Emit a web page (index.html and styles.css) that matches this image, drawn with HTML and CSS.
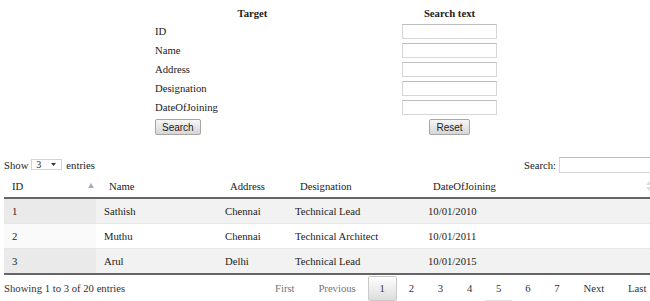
FILE: index.html
```html
<!doctype html>
<html lang="en">
<head>
    <meta charset="UTF-8">
    <meta name="viewport" content="width=device-width, initial-scale=1.0">
    <title>Employees</title>
    <link rel="stylesheet" href="styles.css">
</head>
<body>

<table class="search-panel">
    <colgroup>
        <col class="target-col">
        <col class="text-col">
    </colgroup>
    <thead>
    <tr>
        <th>Target</th>
        <th>Search text</th>
    </tr>
    </thead>
    <tbody>
    <tr><td>ID</td><td class="field"><input type="text" data-column="0"></td></tr>
    <tr><td>Name</td><td class="field"><input type="text" data-column="1"></td></tr>
    <tr><td>Address</td><td class="field"><input type="text" data-column="2"></td></tr>
    <tr><td>Designation</td><td class="field"><input type="text" data-column="3"></td></tr>
    <tr><td>DateOfJoining</td><td class="field"><input type="text" data-column="4"></td></tr>
    <tr class="actions">
        <td><button type="button">Search</button></td>
        <td class="field"><button type="button">Reset</button></td>
    </tr>
    </tbody>
</table>

<div class="dt-wrapper">
    <div class="dt-top">
        <label class="dt-length">
            Show
            <span class="len-select">3
                <svg width="5" height="3" viewBox="0 0 5 3"><path d="M0 0h5L2.5 3z" fill="#333"/></svg>
            </span>
            entries
        </label>
        <label class="dt-filter">
            Search:
            <input type="search">
        </label>
    </div>

    <table class="dt-table">
        <colgroup>
            <col style="width: 92px">
            <col style="width: 121px">
            <col style="width: 70px">
            <col style="width: 133px">
            <col>
        </colgroup>
        <thead>
        <tr>
            <th class="sorting-asc">
                <div class="th-inner">ID
                    <svg width="6" height="5" viewBox="0 0 6 5"><path d="M3 0L6 5H0z" fill="#a9a9cf"/></svg>
                </div>
            </th>
            <th>Name</th>
            <th>Address</th>
            <th>Designation</th>
            <th class="sorting">
                <div class="th-inner">DateOfJoining
                    <svg width="7" height="10" viewBox="0 0 7 10"><path d="M3.5 0L7 4H0zM3.5 10L0 6h7z" fill="#dedede"/></svg>
                </div>
            </th>
        </tr>
        </thead>
        <tbody>
        <tr>
            <td class="sorting-1">1</td><td>Sathish</td><td>Chennai</td><td>Technical Lead</td><td>10/01/2010</td>
        </tr>
        <tr>
            <td class="sorting-1">2</td><td>Muthu</td><td>Chennai</td><td>Technical Architect</td><td>10/01/2011</td>
        </tr>
        <tr>
            <td class="sorting-1">3</td><td>Arul</td><td>Delhi</td><td>Technical Lead</td><td>10/01/2015</td>
        </tr>
        </tbody>
    </table>

    <div class="dt-bottom">
        <div class="dt-info">Showing 1 to 3 of 20 entries</div>
        <div class="dt-paginate">
            <a class="page-btn disabled">First</a>
            <a class="page-btn disabled">Previous</a>
            <a class="page-btn current">1</a>
            <a class="page-btn">2</a>
            <a class="page-btn">3</a>
            <a class="page-btn">4</a>
            <a class="page-btn touched">5</a>
            <a class="page-btn">6</a>
            <a class="page-btn">7</a>
            <a class="page-btn">Next</a>
            <a class="page-btn">Last</a>
        </div>
    </div>
</div>

</body>
</html>
```

FILE: styles.css
```css
html,
body {
    overflow: hidden;
}

body {
    margin: 0;
    width: 650px;
    height: 301px;
    font: 10.7px/1.15 "Liberation Serif", "Times New Roman", serif;
    color: #222;
}

/* column search form */
.search-panel {
    margin: 5px 0 0 150px;
    border-collapse: collapse;
    table-layout: fixed;

    .target-col {
        width: 205px;
    }

    .text-col {
        width: 189px;
    }

    th {
        height: 17px;
        padding: 0;
        text-align: center;
        font-weight: bold;
    }

    td {
        height: 19px;
        padding: 0 0 0 5px;

        &.field {
            padding: 0;
            text-align: center;
        }
    }

    input {
        display: block;
        box-sizing: border-box;
        width: 95px;
        height: 15px;
        margin: 0 auto;
        padding: 0 2px;
        border: 1px solid #d6d6d6;
        border-top-color: #bdbdbd;
        font-size: 10px;
    }

    .actions td {
        height: 20px;
    }

    button {
        height: 16px;
        padding: 0 6px;
        border: 1px solid #a6a6a6;
        border-radius: 2px;
        background: linear-gradient(#f7f7f7, #e6e6e6 50%, #d6d6d6);
        font: 10px "Liberation Sans", Arial, sans-serif;
        color: #222;
    }
}

/* data table */
.dt-wrapper {
    width: 654px;
    margin: 18px 0 0 4px;
}

.dt-top {
    display: flex;
    justify-content: space-between;
    align-items: center;
    height: 20px;
}

.dt-length {
    display: flex;
    align-items: center;

    .len-select {
        display: flex;
        align-items: center;
        justify-content: space-between;
        box-sizing: border-box;
        width: 31px;
        height: 11px;
        margin: 0 4px 0 3px;
        padding: 0 5px 0 4px;
        border: 1px solid #d4d4d4;
        font-size: 10px;
    }
}

.dt-filter {
    display: flex;
    align-items: center;

    input {
        box-sizing: border-box;
        width: 99px;
        height: 16px;
        margin-left: 3px;
        border: 1px solid #d6d6d6;
        border-top-color: #bdbdbd;
    }
}

.dt-table {
    width: 654px;
    border-collapse: collapse;
    table-layout: fixed;

    th {
        height: 22px;
        padding: 0 0 0 13px;
        text-align: left;
        font-weight: normal;
        border-bottom: 2px solid #666;

        &.sorting-asc {
            padding: 0 2px 0 8px;
        }

        &.sorting {
            padding-right: 5px;
        }
    }

    .th-inner {
        display: flex;
        justify-content: space-between;
        align-items: center;
    }

    td {
        height: 24px;
        padding: 0 0 0 8px;
        background: #fff;

        &.sorting-1 {
            background: #fafafa;
        }
    }

    tbody tr:nth-child(odd) td {
        background: #f2f2f2;

        &.sorting-1 {
            background: #eaeaea;
        }
    }

    tbody tr + tr td {
        border-top: 1px solid #e6e6e6;
    }

    tbody tr:last-child td {
        border-bottom: 2px solid #666;
    }
}

.dt-bottom {
    display: flex;
    justify-content: space-between;
    align-items: flex-start;
    margin-top: 1px;
}

.dt-info {
    padding-top: 6px;
    color: #333;
}

.dt-paginate {
    display: flex;

    .page-btn {
        box-sizing: border-box;
        min-width: 16px;
        margin-left: 0.6px;
        padding: 5.3px 10.6px;
        border: 1px solid transparent;
        border-radius: 2px;
        text-align: center;
        color: #333;
        cursor: pointer;

        &.disabled {
            color: #777;
            cursor: default;
        }

        &.current {
            border-color: #c9c9c9;
            background: linear-gradient(#fff, #dcdcdc);
        }

        &.touched {
            border-bottom-color: #e0e0e0;
        }
    }
}
```
